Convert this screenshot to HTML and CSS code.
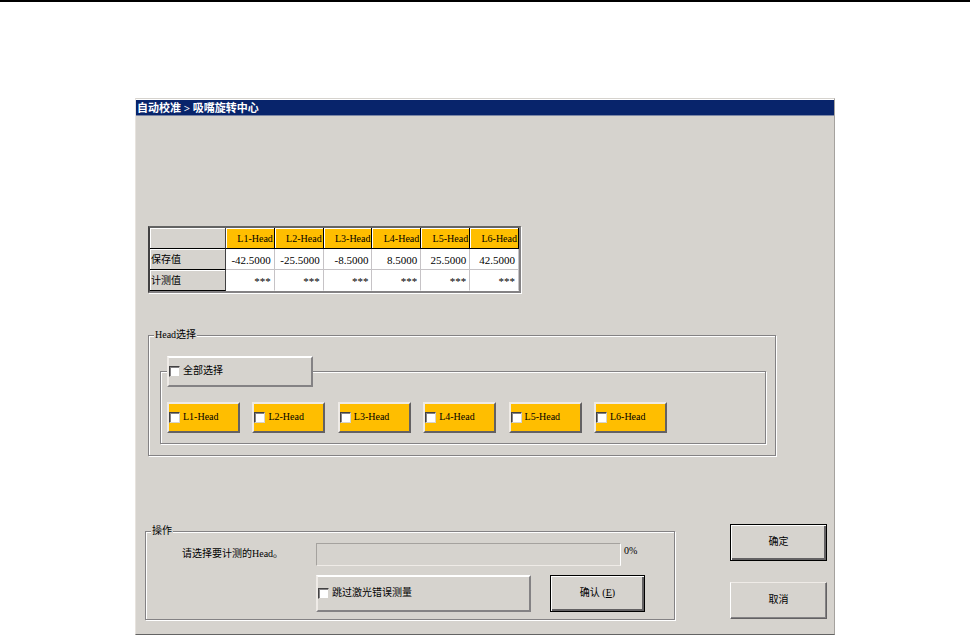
FILE: index.html
```html
<!DOCTYPE html>
<html lang="zh-CN">
<head>
    <meta charset="UTF-8">
    <meta name="viewport" content="width=device-width, initial-scale=1.0">
    <title>自动校准</title>
    <link rel="stylesheet" href="styles.css">
</head>
<body>
    <main class="dialog">
        <h1 class="titlebar">自动校准 &gt; 吸嘴旋转中心</h1>
        <form class="content">
            <table class="values">
                <thead>
                    <tr>
                        <td class="corner"></td>
                        <th scope="col">L1-Head</th>
                        <th scope="col">L2-Head</th>
                        <th scope="col">L3-Head</th>
                        <th scope="col">L4-Head</th>
                        <th scope="col">L5-Head</th>
                        <th scope="col">L6-Head</th>
                    </tr>
                </thead>
                <tbody>
                    <tr>
                        <th scope="row">保存值</th>
                        <td>-42.5000</td>
                        <td>-25.5000</td>
                        <td>-8.5000</td>
                        <td>8.5000</td>
                        <td>25.5000</td>
                        <td>42.5000</td>
                    </tr>
                    <tr>
                        <th scope="row">计测值</th>
                        <td>***</td>
                        <td>***</td>
                        <td>***</td>
                        <td>***</td>
                        <td>***</td>
                        <td>***</td>
                    </tr>
                </tbody>
            </table>

            <fieldset class="group head-group">
                <legend class="group-title">Head选择</legend>
                <fieldset class="group head-list">
                    <legend class="all-heads">
                        <label class="check"><input type="checkbox">全部选择</label>
                    </legend>
                    <div class="heads">
                        <label class="check head"><input type="checkbox">L1-Head</label>
                        <label class="check head"><input type="checkbox">L2-Head</label>
                        <label class="check head"><input type="checkbox">L3-Head</label>
                        <label class="check head"><input type="checkbox">L4-Head</label>
                        <label class="check head"><input type="checkbox">L5-Head</label>
                        <label class="check head"><input type="checkbox">L6-Head</label>
                    </div>
                </fieldset>
            </fieldset>

            <div class="bottom">
                <fieldset class="group operation">
                    <legend class="group-title">操作</legend>
                    <div class="operation-body">
                        <label class="message" for="avance">请选择要计测的Head。</label>
                        <div class="controls">
                            <div class="progress-row">
                                <progress id="avance" value="0" max="100"></progress>
                                <span class="percent">0%</span>
                            </div>
                            <div class="confirm-row">
                                <label class="check skip"><input type="checkbox">跳过激光错误测量</label>
                                <button type="button" class="btn default">确认 (<u>E</u>)</button>
                            </div>
                        </div>
                    </div>
                </fieldset>
                <div class="actions">
                    <button type="button" class="btn default">确定</button>
                    <button type="button" class="btn">取消</button>
                </div>
            </div>
        </form>
    </main>
</body>
</html>
```
FILE: styles.css
```css
* {
    box-sizing: border-box;
}

body {
    margin: 0;
    padding: 96px 135px 0;
    border-top: 2px solid black;
    background-color: white;
    color: black;
    font-family: "Liberation Serif", "Noto Sans CJK SC", serif;
    font-size: 10px;
    line-height: 12px;
}

.dialog {
    padding-top: 1px;
    background-color: #d6d3ce;
    border-top: 1px solid #d6d3ce;
    border-right: 1px solid #a5a29e;
    border-bottom: 1px solid #636363;
    border-left: 1px solid #e7e3de;
    box-shadow: inset 0 1px white;
}

.titlebar {
    margin: 0;
    padding: 0 1px;
    height: 16px;
    background-color: #08246b;
    border-bottom: 1px solid #7b86a5;
    color: white;
    font-size: 11px;
    font-weight: bold;
    line-height: 16px;
}

.content {
    padding: 110px 7px 14px 9px;
}

/* Tabla de valores */
.values {
    margin-left: 3px;
    width: 373px;
    border-collapse: separate;
    border-spacing: 0;
    table-layout: fixed;
    background-color: white;
    border: 2px solid;
    border-color: #636363 #848284 #848284 #424142;
    box-shadow: 1px 1px white;
}

.values th,
.values td {
    height: 21px;
    padding: 1px 3px 0 0;
    border-right: 1px solid #c6c3c6;
    border-bottom: 1px solid #c6c3c6;
    font-size: 11px;
    font-weight: normal;
    text-align: right;
}

.values thead th {
    padding-right: 1px;
    background-color: #ffbe00;
    border-right-color: black;
    border-bottom-color: black;
    box-shadow: inset 1px 1px white;
    font-size: 10px;
}

.values tbody th,
.values .corner {
    width: 76px;
    padding: 1px 0 0 1px;
    background-color: #d6d3ce;
    border-right-color: #424142;
    border-bottom-color: black;
    box-shadow: inset 1px 1px white;
    font-size: 10px;
    text-align: left;
}

.values tr:last-child td {
    border-bottom-color: white;
}

.values thead tr:last-child .corner {
    border-bottom-color: black;
}

/* Grupos con borde */
.group {
    min-width: 0;
    margin: 0;
    padding: 0;
    border: 1px solid #848284;
    box-shadow: inset 1px 1px white, 1px 1px white;
}

.group-title {
    margin-left: 5px;
    padding: 0 1px;
    background-color: #d6d3ce; /* Tapa la línea blanca */
}

.head-group {
    margin: 36px 51px 0 3px;
}

.head-list {
    margin: 15px 9px 11px 11px;
    padding: 15px 6px 10px;
}

.all-heads {
    width: 146px;
    padding: 0;
}

.heads {
    display: flex;
    justify-content: space-between;
    max-width: 500px;
}

.check {
    display: flex;
    align-items: center;
    gap: 3px;
    height: 31px;
    padding-bottom: 1px;
    background-color: #d6d3ce;
    border: 2px solid;
    border-color: white #848284 #848284 #efebe7;
}

.check input {
    appearance: none;
    flex: none;
    width: 11px;
    height: 11px;
    margin: 0;
    background-color: white;
    border: 1px solid;
    border-color: #424142 #d6d3ce #d6d3ce #424142;
    box-shadow: inset 1px 1px #848284;
}

.check input:checked {
    background-color: #08246b;
}

.head {
    width: 73px;
    background-color: #ffbe00;
    border-color: #efebe7 #636163 #636163 #efebe7;
}

/* Parte inferior */
.bottom {
    display: flex;
    gap: 55px;
    margin-top: 68px;
}

.operation {
    flex: 1;
    margin-top: 1px;
}

.operation-body {
    display: flex;
    padding: 6px 29px 7px 36px;
}

.message {
    width: 134px;
    padding-top: 5px;
}

.controls {
    flex: 1;
}

.progress-row {
    display: flex;
}

progress {
    appearance: none;
    flex: 1;
    min-width: 0;
    height: 23px;
    background-color: #d6d3ce;
    border: 1px solid;
    border-color: #a5a29e white #efebe7 #a5a29e;
}

progress::-webkit-progress-bar {
    background-color: #d6d3ce;
}

progress::-webkit-progress-value {
    background-color: #08246b;
}

.percent {
    width: 24px;
    padding: 2px 0 0 3px;
}

.confirm-row {
    display: flex;
    gap: 19px;
    margin-top: 9px;
}

.skip {
    flex: 1;
    height: 37px;
}

.confirm-row .btn {
    width: 95px;
}

.btn {
    height: 37px;
    padding: 0 0 2px;
    background-color: #d6d3ce;
    border: 1px solid;
    border-color: #efebe7 #636163 #636163 white;
    box-shadow: inset -1px -1px #848284;
    color: black;
    font-family: inherit;
    font-size: 10px;
    line-height: 12px;
}

.btn.default {
    border-color: black;
    box-shadow: inset 1px 1px white, inset -2px -2px #636163;
}

.actions {
    display: flex;
    flex-direction: column;
    gap: 21px;
    width: 97px;
}
```
